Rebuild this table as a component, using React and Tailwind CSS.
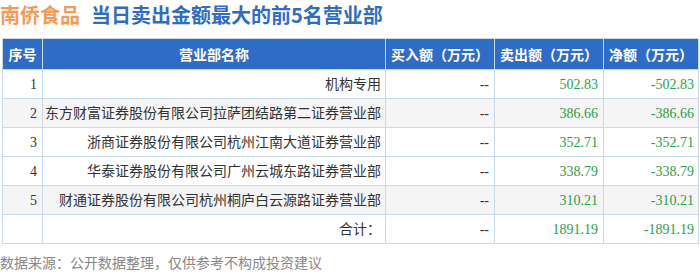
import React from "react";

const rows = [
  ["1", "机构专用", "--", "502.83", "-502.83"],
  ["2", "东方财富证券股份有限公司拉萨团结路第二证券营业部", "--", "386.66", "-386.66"],
  ["3", "浙商证券股份有限公司杭州江南大道证券营业部", "--", "352.71", "-352.71"],
  ["4", "华泰证券股份有限公司广州云城东路证券营业部", "--", "338.79", "-338.79"],
  ["5", "财通证券股份有限公司杭州桐庐白云源路证券营业部", "--", "310.21", "-310.21"],
  ["", "合计：", "--", "1891.19", "-1891.19"],
];

const bodyFont = { fontFamily: '"Liberation Serif", "Noto Sans CJK SC", serif' };

export default function App() {
  return (
    <div className="relative w-[700px] h-[273px] bg-white overflow-hidden" style={{ fontFamily: '"Noto Sans CJK SC", sans-serif' }}>
      <div className="flex items-center h-[30px] gap-[11px] text-[20px] font-bold leading-[30px]">
        <span className="text-[#f59b55]">南侨食品</span>
        <span className="text-[#2f6cc4]">当日卖出金额最大的前5名营业部</span>
      </div>
      <div className="mt-[8px] ml-[2px]">
        <table className="table-fixed border-collapse w-[696px] text-[14px]">
          <colgroup>
            <col className="w-[40px]" />
            <col className="w-[343px]" />
            <col className="w-[109px]" />
            <col className="w-[109px]" />
            <col className="w-[95px]" />
          </colgroup>
          <thead>
            <tr className="h-[31px] bg-[#2f6cc8] text-white font-bold text-[14px]">
              <th className="border border-[#c9d9ec] font-bold text-center">序号</th>
              <th className="border border-[#c9d9ec] font-bold text-center">营业部名称</th>
              <th className="border border-[#c9d9ec] font-bold text-center whitespace-nowrap">买入额（万元）</th>
              <th className="border border-[#c9d9ec] font-bold text-center whitespace-nowrap">卖出额（万元）</th>
              <th className="border border-[#c9d9ec] font-bold text-center whitespace-nowrap">净额（万元）</th>
            </tr>
          </thead>
          <tbody style={bodyFont}>
            {rows.map((r, i) => (
              <tr key={i} className={`h-[29px] ${i === 1 || i === 4 ? "bg-[#f5f5f5]" : "bg-white"}`}>
                <td className="border border-[#c9d9ec] text-right pr-[5px] text-[#333]">{r[0]}</td>
                <td className="border border-[#c9d9ec] text-right pr-[4px] text-[#333] whitespace-nowrap">{r[1]}</td>
                <td className="border border-[#c9d9ec] text-right pr-[5px] text-[#333]">{r[2]}</td>
                <td className="border border-[#c9d9ec] text-right pr-[5px] text-[#2aa145]">{r[3]}</td>
                <td className="border border-[#c9d9ec] text-right pr-[4px] text-[#2aa145]">{r[4]}</td>
              </tr>
            ))}
          </tbody>
        </table>
      </div>
      <div className="mt-[8px] text-[14px] text-[#888] leading-[20px]">数据来源：公开数据整理，仅供参考不构成投资建议</div>
    </div>
  );
}
